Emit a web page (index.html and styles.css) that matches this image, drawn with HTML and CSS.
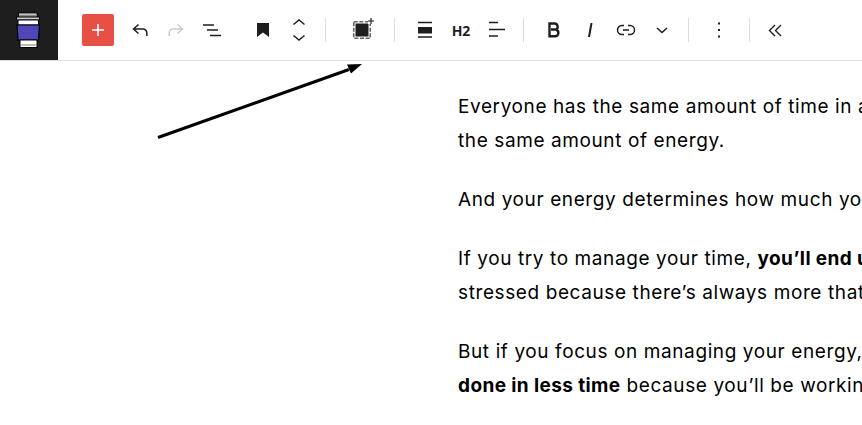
FILE: index.html
```html
<!DOCTYPE html>
<html lang="en">
<head>
  <meta charset="UTF-8">
  <title>Editor</title>
  <link rel="stylesheet" href="styles.css">
</head>
<body>

  <div class="toolbar">
    <div class="logo">
      <svg width="28" height="38" viewBox="0 0 28 38">
        <path d="M3.500 2h18.500v4H3.500z" fill="#fff" stroke="#000" stroke-width="1"/>
        <path d="M4 4.500h17.500" stroke="#888" stroke-width="2"/>
        <path d="M1.500 6h23v3h-23z" fill="#ccc" stroke="#000" stroke-width="1"/>
        <path d="M3 9h20.500v5H3z" fill="#fff" stroke="#000" stroke-width="1"/>
        <path d="M2 14h22.500l-1 15H3z" fill="#4f47b8" stroke="#000" stroke-width="1.200"/>
        <path d="M5 29h17v7.500H5z" fill="#fff" stroke="#000" stroke-width="1"/>
        <path d="M5.500 34h16" stroke="#777" stroke-width="1"/>
      </svg>
    </div>

    <button class="add-btn">
      <svg width="16" height="16" viewBox="0 0 16 16"><path d="M8 2v12M2 8h12" stroke="#fff" stroke-width="1.600"/></svg>
    </button>

    <div class="group first">
      <span class="tool"><svg width="24" height="24" viewBox="0 0 24 24"><path d="M10.500 6.500 5.500 11l5 4.500M6 11h9a3.800 3.800 0 0 1 3.800 3.800V18" fill="none" stroke="#1e1e1e" stroke-width="1.500"/></svg></span>
      <span class="tool"><svg width="24" height="24" viewBox="0 0 24 24"><path d="M13.500 6.500l5 4.500-5 4.500M18 11H9a3.800 3.800 0 0 0-3.800 3.800V18" fill="none" stroke="#ccc" stroke-width="1.500"/></svg></span>
      <span class="tool"><svg width="24" height="24" viewBox="0 0 24 24"><path d="M3 7h11M7 12h11M10 17.500h11" fill="none" stroke="#1e1e1e" stroke-width="1.500"/></svg></span>
    </div>

    <div class="group block-type">
      <span class="tool"><svg width="24" height="24" viewBox="0 0 24 24"><path d="M6 5h12v14l-6-4.500L6 19z" fill="#1e1e1e"/></svg></span>
      <span class="tool"><svg width="24" height="36" viewBox="0 0 24 36"><path d="M6.500 12.500 12 8l5.500 4.500M6.500 23.500 12 28l5.500-4.500" fill="none" stroke="#1e1e1e" stroke-width="1.500"/></svg></span>
    </div>
    <i class="sep"></i>

    <div class="group transform">
      <span class="tool"><svg width="24" height="24" viewBox="0 0 24 24"><rect x="5.500" y="5.500" width="13" height="13" fill="#1e1e1e"/><rect x="3.750" y="3.750" width="16.500" height="16.500" fill="none" stroke="#666" stroke-width="1.600" stroke-dasharray="4 1.600"/><rect x="18" y="0" width="6" height="6" fill="#fff"/><path d="M21 0v6M18 3h6" stroke="#1e1e1e" stroke-width="1.200"/></svg></span>
    </div>
    <i class="sep wide"></i>

    <div class="group">
      <span class="tool"><svg width="24" height="24" viewBox="0 0 24 24"><path d="M5 4.500h14M5 19h14" stroke="#1e1e1e" stroke-width="1.500"/><rect x="5" y="9" width="14" height="6.500" fill="#1e1e1e"/></svg></span>
      <span class="tool heading">H2</span>
      <span class="tool"><svg width="24" height="24" viewBox="0 0 24 24"><path d="M4 4.500h9M4 11.500h16M4 18h9" stroke="#1e1e1e" stroke-width="1.500"/></svg></span>
    </div>
    <i class="sep"></i>

    <div class="group">
      <span class="tool"><svg width="24" height="24" viewBox="0 0 24 24"><path d="M7.500 5.500h5a3.200 3.200 0 0 1 1.500 6 3.500 3.500 0 0 1-1 6.800H7.500zM9 11.500h4" fill="none" stroke="#1e1e1e" stroke-width="2.400"/></svg></span>
      <span class="tool"><svg width="24" height="24" viewBox="0 0 24 24"><path d="M13.500 5l-2.500 14" fill="none" stroke="#1e1e1e" stroke-width="2"/></svg></span>
      <span class="tool"><svg width="24" height="24" viewBox="0 0 24 24"><path d="M10 7.500H8a4.500 4.500 0 0 0 0 9h2M14 7.500h2a4.500 4.500 0 0 1 0 9h-2M9 12h6" fill="none" stroke="#1e1e1e" stroke-width="1.500"/></svg></span>
      <span class="tool"><svg width="24" height="24" viewBox="0 0 24 24"><path d="M7 10l5 4.500 5-4.500" fill="none" stroke="#1e1e1e" stroke-width="1.500"/></svg></span>
    </div>
    <i class="sep"></i>

    <div class="group options">
      <span class="tool"><svg width="24" height="24" viewBox="0 0 24 24"><path d="M11 4.500h2v2h-2zM11 11h2v2h-2zM11 17.500h2v2h-2z" fill="#1e1e1e"/></svg></span>
    </div>
    <i class="sep"></i>

    <div class="group collapse">
      <span class="tool"><svg width="24" height="24" viewBox="0 0 24 24"><path d="M12 7 6.500 12.500 12 18M18 7l-5.500 5.500L18 18" fill="none" stroke="#1e1e1e" stroke-width="1.400"/></svg></span>
    </div>
  </div>

  <svg class="pointer" width="220" height="90" viewBox="0 0 220 90">
    <path d="M8 77.500 199 9.500" stroke="#000" stroke-width="3"/>
    <path d="M212 4 197 4.500l4 9z" fill="#000"/>
  </svg>

  <div class="content">
    <p>Everyone has the same amount of time in a<br>the same amount of energy.</p>
    <p>And your energy determines how much you</p>
    <p>If you try to manage your time, <b>you’ll end up</b><br>stressed because there’s always more that</p>
    <p>But if you focus on managing your energy,<br><b>done in less time</b> because you’ll be working</p>
  </div>

</body>
</html>
```

FILE: styles.css
```css
html, body {
  margin: 0;
  height: 100%;
  overflow: hidden;
  background-color: white;
}

body {
  position: relative;
  font-family: Inter, sans-serif;
  color: black;
}

.toolbar {
  display: flex;
  align-items: center;
  height: 60px;
  border-bottom: 1px solid #e0e0e0;
}

.logo {
  display: flex;
  align-items: center;
  justify-content: center;
  width: 58px;
  height: 60px;
  background-color: #1e1e1e;
  flex-shrink: 0;
}

.add-btn {
  display: flex;
  align-items: center;
  justify-content: center;
  width: 32px;
  height: 32px;
  margin-left: 24px;
  padding: 0;
  border: none;
  border-radius: 2px;
  background-color: #e65045;
}

.group {
  display: flex;
  align-items: center;
  flex-shrink: 0;
}

.first {
  margin-left: 8px;
}

.block-type {
  margin-left: 15px;
}

.tool {
  display: flex;
  align-items: center;
  justify-content: center;
  width: 36px;
  height: 36px;
}

.heading {
  font-family: "Open Sans", sans-serif;
  font-size: 14px;
  font-weight: 700;
  color: #1e1e1e;
}

.sep {
  width: 1px;
  height: 24px;
  margin: 0 12px 0 8px;
  background-color: #ddd;
  flex-shrink: 0;
}

.sep.wide {
  margin-left: 14px;
}

.transform {
  margin-left: 6px;
}

.options {
  margin-right: 4px;
}

.collapse {
  margin-left: -5px;
}

.pointer {
  position: absolute;
  left: 150px;
  top: 60px;
}

.content {
  padding: 29px 0 0 458px;
  width: 1000px;
  font-size: 19px;
  line-height: 34px;
  letter-spacing: 0.6px;
  white-space: nowrap;
}

.content p {
  margin: 0 0 25px;
}

.content b {
  font-weight: 700;
  letter-spacing: 0.4px;
}
```
